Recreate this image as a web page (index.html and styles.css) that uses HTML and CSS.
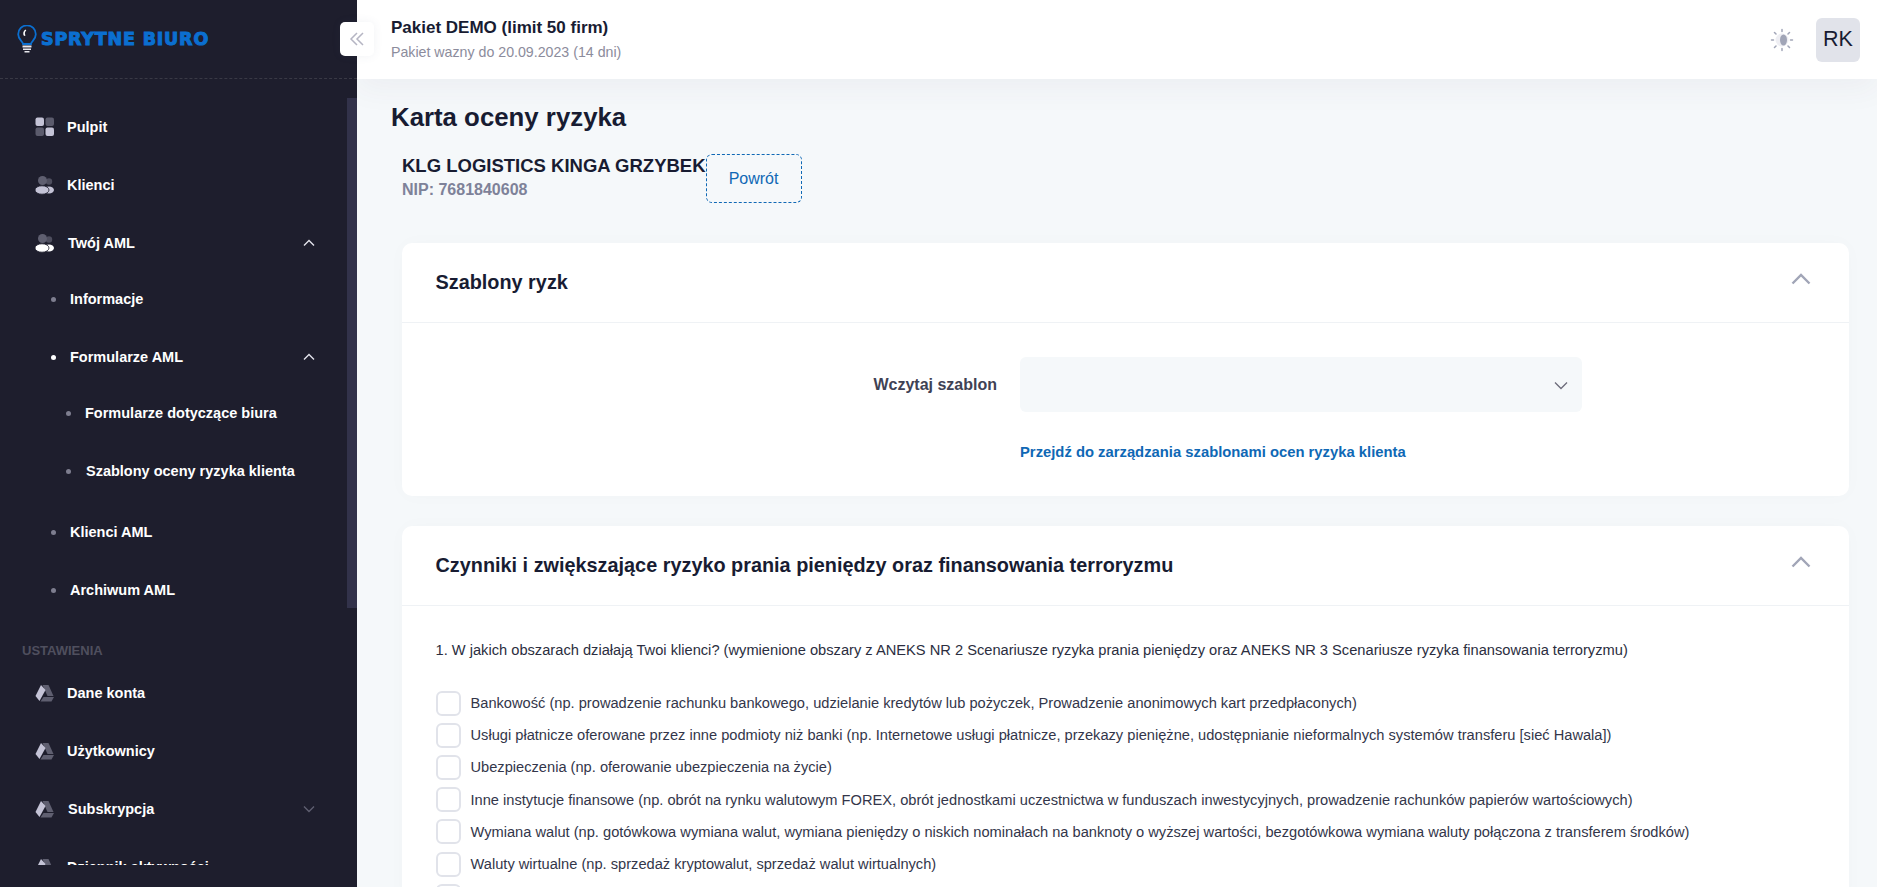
FILE: index.html
```html
<!DOCTYPE html>
<html lang="pl">
<head>
<meta charset="UTF-8">
<meta name="viewport" content="width=device-width, initial-scale=1.0">
<link rel="stylesheet" href="styles.css">
<title>Karta oceny ryzyka</title>
</head>

<body>

  <aside class="sidebar">
    <div class="logo-bar">
      <svg class="logo-bulb" width="20" height="28" viewBox="0 0 20 28">
        <path d="M6 19c0-2.500-4.800-4-4.800-9.800a8.800 8.800 0 0 1 17.600 0c0 5.800-4.800 7.300-4.800 9.800z" fill="none" stroke="#0b6fd0" stroke-width="1.800"/>
        <path d="M8.500 4.500a4.500 4.500 0 0 0-1.500 6.500l1.500-.5c-1-2-.8-3.600.8-5z" fill="#fff"/>
        <path d="M5.500 20.500h9v2h-9zM6 23.500h8v1.500h-8zM7.500 26h5v1.500h-5z" fill="#e8e8ee"/>
      </svg>
      <span class="logo-text">SPRYTNE BIURO</span>
      <button class="collapse-btn">
        <svg width="16" height="16" viewBox="0 0 16 16" fill="none" stroke="#b5b5c3" stroke-width="1.500">
          <path d="M8 2 2 8l6 6M14 2 8 8l6 6"/>
        </svg>
      </button>
    </div>

    <div class="menu-wrap">
      <nav class="menu">
        <a class="menu-item">
          <svg class="menu-icon" width="20" height="20" viewBox="0 0 20 20">
            <rect x="0.500" y="0.500" width="8.500" height="8.500" rx="2" fill="#c4c3d6"/>
            <rect x="10.500" y="0.500" width="8.500" height="8.500" rx="2" fill="#5b5b6c"/>
            <rect x="0.500" y="10.500" width="8.500" height="8.500" rx="2" fill="#5b5b6c"/>
            <rect x="10.500" y="10.500" width="8.500" height="8.500" rx="2" fill="#c4c3d6"/>
          </svg>
          <span>Pulpit</span>
        </a>
        <a class="menu-item">
          <svg class="menu-icon" width="20" height="20" viewBox="0 0 20 20">
            <circle cx="14" cy="6.500" r="3.200" fill="#4e4e5e"/>
            <circle cx="7.500" cy="5.500" r="4.500" fill="#5f5f70"/>
            <ellipse cx="14" cy="15" rx="5" ry="3.500" fill="#c4c3d6"/>
            <ellipse cx="7" cy="15" rx="7" ry="4.200" fill="#c4c3d6" stroke="#1e1e2d" stroke-width="0.800"/>
          </svg>
          <span>Klienci</span>
        </a>
        <a class="menu-item">
          <svg class="menu-icon" width="20" height="20" viewBox="0 0 20 20">
            <circle cx="14" cy="6.500" r="3.200" fill="#4e4e5e"/>
            <circle cx="7.500" cy="5.500" r="4.500" fill="#5f5f70"/>
            <ellipse cx="14" cy="15" rx="5" ry="3.500" fill="#fff"/>
            <ellipse cx="7" cy="15" rx="7" ry="4.200" fill="#fff" stroke="#1e1e2d" stroke-width="0.800"/>
          </svg>
          <span class="shift">Twój AML</span>
          <svg class="menu-arrow" width="12" height="12" viewBox="0 0 12 12" fill="none" stroke="#e4e4ec" stroke-width="1.400"><path d="M1 8.500l5-5 5 5"/></svg>
        </a>

        <a class="sub-item level-start"><i class="dot"></i><span>Informacje</span></a>
        <a class="sub-item"><i class="dot dot-on"></i><span>Formularze AML</span>
          <svg class="menu-arrow" width="12" height="12" viewBox="0 0 12 12" fill="none" stroke="#e4e4ec" stroke-width="1.400"><path d="M1 8.500l5-5 5 5"/></svg>
        </a>
        <a class="sub-sub-item level-start"><i class="dot"></i><span>Formularze dotyczące biura</span></a>
        <a class="sub-sub-item shift-text"><i class="dot"></i><span>Szablony oceny ryzyka klienta</span></a>
        <a class="sub-item level-end"><i class="dot"></i><span>Klienci AML</span></a>
        <a class="sub-item"><i class="dot"></i><span>Archiwum AML</span></a>

        <div class="menu-section">USTAWIENIA</div>

        <a class="menu-item">
          <svg class="menu-icon" width="20" height="20" viewBox="0 0 20 20">
            <path d="M7.500 2h6l5 11h-6z" fill="#5f5f70"/>
            <path d="M6 2 0.500 13l4 5 6-11z" fill="#c4c3d6"/>
            <path d="M8.500 14h10.500l-2.500 4.500H5.500z" fill="#5f5f70"/>
          </svg>
          <span>Dane konta</span>
        </a>
        <a class="menu-item">
          <svg class="menu-icon" width="20" height="20" viewBox="0 0 20 20">
            <path d="M7.500 2h6l5 11h-6z" fill="#5f5f70"/>
            <path d="M6 2 0.500 13l4 5 6-11z" fill="#c4c3d6"/>
            <path d="M8.500 14h10.500l-2.500 4.500H5.500z" fill="#5f5f70"/>
          </svg>
          <span>Użytkownicy</span>
        </a>
        <a class="menu-item">
          <svg class="menu-icon" width="20" height="20" viewBox="0 0 20 20">
            <path d="M7.500 2h6l5 11h-6z" fill="#5f5f70"/>
            <path d="M6 2 0.500 13l4 5 6-11z" fill="#c4c3d6"/>
            <path d="M8.500 14h10.500l-2.500 4.500H5.500z" fill="#5f5f70"/>
          </svg>
          <span class="shift">Subskrypcja</span>
          <svg class="menu-arrow" width="12" height="12" viewBox="0 0 12 12" fill="none" stroke="#5f5f70" stroke-width="1.400"><path d="M1 3.500l5 5 5-5"/></svg>
        </a>
        <a class="menu-item">
          <svg class="menu-icon" width="20" height="20" viewBox="0 0 20 20">
            <path d="M7.500 2h6l5 11h-6z" fill="#5f5f70"/>
            <path d="M6 2 0.500 13l4 5 6-11z" fill="#c4c3d6"/>
            <path d="M8.500 14h10.500l-2.500 4.500H5.500z" fill="#5f5f70"/>
          </svg>
          <span>Dziennik aktywności</span>
        </a>
      </nav>
      <div class="menu-scrollbar"></div>
    </div>
  </aside>

  <div class="page">
    <header class="topbar">
      <div class="plan">
        <div class="plan-name">Pakiet DEMO (limit 50 firm)</div>
        <div class="plan-date">Pakiet wazny do 20.09.2023 (14 dni)</div>
      </div>
      <svg class="theme-icon" width="24" height="24" viewBox="0 0 24 24">
        <g stroke="#a1a5b7" stroke-width="1.500" stroke-linecap="round">
          <path d="M12 1.500v2M12 20.500v2M1.500 12h2M20.500 12h2M4.500 4.500 6 6M18 18l1.500 1.500M4.500 19.500 6 18M18 6l1.500-1.500"/>
        </g>
        <circle cx="12" cy="12" r="6.500" fill="#eeeef3"/>
        <ellipse cx="13.500" cy="12" rx="3.500" ry="5.500" fill="#a1a5b7"/>
      </svg>
      <div class="avatar">RK</div>
    </header>

    <main class="content">
      <h1 class="page-title">Karta oceny ryzyka</h1>

      <div class="client-row">
        <div class="client">
          <div class="client-name">KLG LOGISTICS KINGA GRZYBEK</div>
          <div class="client-nip">NIP: 7681840608</div>
        </div>
        <button class="back-btn">Powrót</button>
      </div>

      <section class="card">
        <div class="card-head">
          <h2>Szablony ryzk</h2>
          <svg class="card-arrow" width="20" height="20" viewBox="0 0 20 20" fill="none" stroke="#a1a5b7" stroke-width="2.400"><path d="M1.500 14.500 10 6l8.500 8.500"/></svg>
        </div>
        <div class="template-body">
          <div class="template-row">
            <label class="template-label">Wczytaj szablon</label>
            <div class="select-box">
              <svg width="16" height="16" viewBox="0 0 16 16" fill="none" stroke="#6c6c7a" stroke-width="1.300"><path d="M2 5.500 8 11.500l6-6"/></svg>
            </div>
          </div>
          <a class="template-link">Przejdź do zarządzania szablonami ocen ryzyka klienta</a>
        </div>
      </section>

      <section class="card">
        <div class="card-head">
          <h2>Czynniki i zwiększające ryzyko prania pieniędzy oraz finansowania terroryzmu</h2>
          <svg class="card-arrow" width="20" height="20" viewBox="0 0 20 20" fill="none" stroke="#a1a5b7" stroke-width="2.400"><path d="M1.500 14.500 10 6l8.500 8.500"/></svg>
        </div>
        <div class="card-body">
          <p class="question">1. W jakich obszarach działają Twoi klienci? (wymienione obszary z ANEKS NR 2 Scenariusze ryzyka prania pieniędzy oraz ANEKS NR 3 Scenariusze ryzyka finansowania terroryzmu)</p>
          <label class="check"><i class="box"></i>Bankowość (np. prowadzenie rachunku bankowego, udzielanie kredytów lub pożyczek, Prowadzenie anonimowych kart przedpłaconych)</label>
          <label class="check"><i class="box"></i>Usługi płatnicze oferowane przez inne podmioty niż banki (np. Internetowe usługi płatnicze, przekazy pieniężne, udostępnianie nieformalnych systemów transferu [sieć Hawala])</label>
          <label class="check"><i class="box"></i>Ubezpieczenia (np. oferowanie ubezpieczenia na życie)</label>
          <label class="check"><i class="box"></i>Inne instytucje finansowe (np. obrót na rynku walutowym FOREX, obrót jednostkami uczestnictwa w funduszach inwestycyjnych, prowadzenie rachunków papierów wartościowych)</label>
          <label class="check"><i class="box"></i>Wymiana walut (np. gotówkowa wymiana walut, wymiana pieniędzy o niskich nominałach na banknoty o wyższej wartości, bezgotówkowa wymiana waluty połączona z transferem środków)</label>
          <label class="check"><i class="box"></i>Waluty wirtualne (np. sprzedaż kryptowalut, sprzedaż walut wirtualnych)</label>
          <label class="check"><i class="box"></i></label>
        </div>
      </section>
    </main>
  </div>

</body>
</html>
```

FILE: styles.css
```css
* {
  box-sizing: border-box;
}
html, body {
  height: 100%;
}
body {
  margin: 0;
  display: flex;
  overflow: hidden;
  background-color: #f5f8fa;
  font-family: "Liberation Sans", Arial, sans-serif;
  color: #181c32;
}
a {
  text-decoration: none;
}

/* menu po lewej */
.sidebar {
  width: 357px;
  flex-shrink: 0;
  height: 887px;
  background-color: #1e1e2d;
  display: flex;
  flex-direction: column;
}
.logo-bar {
  height: 79px;
  flex-shrink: 0;
  border-bottom: 1px dashed #393945;
  display: flex;
  align-items: center;
  padding-left: 17px;
  position: relative;
}
.logo-bulb {
  margin-right: 4px;
}
.logo-text {
  font-family: "DejaVu Sans", sans-serif;
  font-weight: bold;
  font-size: 17.5px;
  letter-spacing: 0.8px;
  color: #0b6fd0;
  -webkit-text-stroke: 1px #0b6fd0;
}
.collapse-btn {
  position: absolute;
  left: 340px;
  top: 22px;
  width: 34px;
  height: 34px;
  padding: 0;
  border: 0;
  border-radius: 5px;
  background-color: #fff;
  box-shadow: 0 0 10px rgba(76, 87, 125, 0.08);
  display: flex;
  align-items: center;
  justify-content: center;
  z-index: 5;
}

.menu-wrap {
  height: 786px;
  overflow: hidden;
  position: relative;
  padding-top: 19px;
}
.menu {
  display: flex;
  flex-direction: column;
  padding-right: 40px;
}
.menu-scrollbar {
  position: absolute;
  right: 0;
  top: 19px;
  width: 10px;
  height: 510px;
  background-color: #32324a;
}
.menu-item, .sub-item, .sub-sub-item {
  display: flex;
  align-items: center;
  height: 58px;
  flex-shrink: 0;
  font-size: 14.5px;
  font-weight: bold;
  color: #fff;
}
.menu-item {
  padding-left: 35px;
}
.menu-icon {
  margin-right: 12px;
  flex-shrink: 0;
}
.shift {
  margin-left: 1px;
}
.menu-arrow {
  margin-left: auto;
  margin-right: 2px;
}
.sub-item {
  padding-left: 51px;
}
.sub-sub-item {
  padding-left: 66px;
}
.level-start {
  margin-top: -2px;
}
.level-end {
  margin-top: 3px;
}
.dot {
  width: 5px;
  height: 5px;
  border-radius: 50%;
  background-color: #7e7e8f;
  margin-right: 14px;
  flex-shrink: 0;
}
.dot-on {
  background-color: #fff;
}
.shift-text span {
  margin-left: 1px;
}
.menu-section {
  height: 24px;
  margin: 20px 0 1px;
  padding-left: 22px;
  font-size: 13px;
  font-weight: bold;
  line-height: 24px;
  color: #4f4f5e;
}

/* gorny pasek */
.page {
  flex: 1;
  min-width: 0;
  height: 887px;
  overflow: hidden;
}
.topbar {
  height: 79px;
  background-color: #fff;
  display: flex;
  align-items: center;
  padding: 0 17px 0 34px;
  box-shadow: 0 10px 30px rgba(82, 63, 105, 0.05);
  position: relative;
}
.plan {
  flex: 1;
}
.plan-name {
  font-size: 17px;
  font-weight: bold;
  line-height: 20px;
}
.plan-date {
  font-size: 14.2px;
  line-height: 20px;
  margin-top: 4px;
  color: #8c8c9c;
}
.theme-icon {
  margin-right: 22px;
}
.avatar {
  width: 44px;
  height: 44px;
  border-radius: 6px;
  background-color: #e1e3ea;
  display: flex;
  align-items: center;
  justify-content: center;
  font-size: 21.5px;
}

/* tresc */
.content {
  padding: 22px 28px 0 34px;
}
.page-title {
  margin: 0;
  font-size: 25.8px;
  line-height: 32px;
  font-weight: bold;
}
.client-row {
  display: flex;
  margin-top: 21px;
  padding-left: 11px;
}
.client-name {
  font-size: 18.5px;
  font-weight: bold;
  line-height: 22px;
  margin-top: 1px;
}
.client-nip {
  font-size: 16px;
  font-weight: bold;
  line-height: 20px;
  margin-top: 3px;
  color: #7e8299;
}
.back-btn {
  width: 96px;
  height: 49px;
  border: 1px dashed #0f68b5;
  border-radius: 6px;
  background: transparent;
  color: #0f68b5;
  font-family: inherit;
  font-size: 16px;
}
.card {
  margin: 40px 0 0 11px;
  background-color: #fff;
  border-radius: 10px;
  box-shadow: 0 0 20px rgba(76, 87, 125, 0.02);
}
.card + .card {
  margin-top: 30px;
}
.card-head {
  height: 80px;
  display: flex;
  align-items: center;
  justify-content: space-between;
  padding: 0 34px 0 33.5px;
  border-bottom: 1px solid #eff2f5;
}
.card-head h2 {
  margin: 0;
  font-size: 19.85px;
  font-weight: bold;
}
.card-arrow {
  margin-top: -7px;
  margin-right: 4px;
}
.template-body {
  height: 173px;
  padding: 34px 34px 0;
}
.template-row {
  display: flex;
  align-items: center;
}
.template-label {
  width: 584px;
  padding-right: 23px;
  text-align: right;
  font-size: 16px;
  font-weight: bold;
  color: #3f4254;
}
.select-box {
  width: 562px;
  height: 55px;
  border-radius: 6px;
  background-color: #f5f8fa;
  display: flex;
  align-items: center;
  justify-content: flex-end;
  padding-right: 13px;
}
.template-link {
  display: block;
  margin: 32px 0 0 584px;
  font-size: 14.8px;
  font-weight: bold;
  color: #0f68b5;
}
.card-body {
  padding: 0 34px 0 33.5px;
}
.question {
  margin: 0;
  padding: 34px 0 27px;
  font-size: 14.67px;
  line-height: 20px;
  color: #2b2e40;
}
.check {
  display: flex;
  align-items: center;
  height: 32.2px;
  font-size: 14.65px;
  color: #33364a;
}
.box {
  width: 25px;
  height: 25px;
  margin-right: 10px;
  border: 2px solid #e1e3ea;
  border-radius: 6px;
  background-color: #fff;
  flex-shrink: 0;
}
```
